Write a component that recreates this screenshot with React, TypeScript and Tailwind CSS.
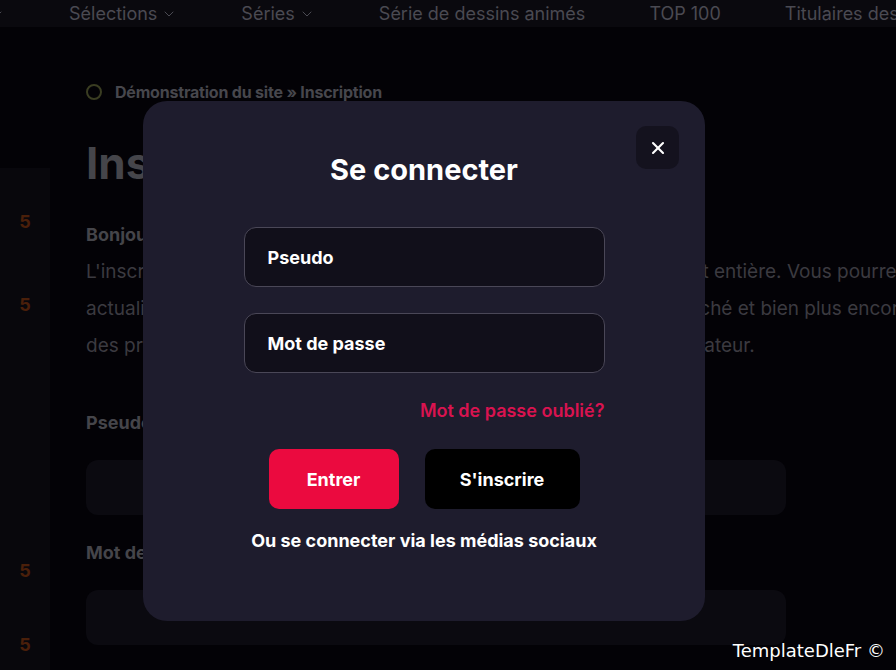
import { X, ChevronDown } from "lucide-react";

const navItems = [
  { label: "Sélections", drop: true },
  { label: "Séries", drop: true },
  { label: "Série de dessins animés", drop: false },
  { label: "TOP 100", drop: false },
  { label: "Titulaires des droits", drop: false },
];

function Background() {
  return (
    <div className="flex flex-col h-[670px] bg-[#030206]">
      <nav className="h-[27px] shrink-0 bg-[#0a090e] flex items-center gap-[64px] whitespace-nowrap text-[18px] text-[#4a4a52] overflow-hidden">
        <ChevronDown className="w-4 h-4 -ml-[11px] shrink-0" strokeWidth={1.5} />
        {navItems.map((it) => (
          <span key={it.label} className="flex items-center gap-1 shrink-0">
            {it.label}
            {it.drop && <ChevronDown className="w-4 h-4" strokeWidth={1.5} />}
          </span>
        ))}
      </nav>

      <div className="flex-1 flex">
        {/* left rating column */}
        <div className="w-[50px] shrink-0 flex flex-col">
          <div className="h-[141px]" />
          <div className="flex-1 bg-[#08070c] flex flex-col items-center text-[18px] leading-[26px] font-bold text-[#4a1f0a]">
            <span className="mt-[41px]">5</span>
            <span className="mt-[57px]">5</span>
            <span className="mt-[240px]">5</span>
            <span className="mt-[48px]">5</span>
          </div>
        </div>

        <div className="flex-1 pl-[36px] pt-[55px] text-[#3b3a40] overflow-hidden whitespace-nowrap">
          <div className="flex items-center gap-[13px] text-[16px] leading-[20px] font-bold text-[#47474d] tracking-[-0.2px]">
            <span className="w-4 h-4 rounded-full border-2 border-[#3a3d22]" />
            Démonstration du site » Inscription
          </div>
          <h1 className="mt-[35px] text-[44px] font-bold leading-[52px] text-[#45454a]">Inscription</h1>
          <p className="mt-[27px] text-[18px] font-bold text-[#45454a] leading-[37px]">Bonjour, cher visiteur !</p>
          <p className="text-[19px] leading-[37px]">
            L'inscription sur notre site vous permettra d'en être un membre à part entière. Vous pourrez
            <br />
            actualiser les nouvelles, écrire des commentaires, voir le contenu caché et bien plus encore. Si
            <br />
            des problèmes surviennent lors de l'inscription, contactez l'administrateur.
          </p>
          <p className="mt-[46px] text-[18px] font-bold text-[#45454a] leading-[26px]">Pseudo:</p>
          <div className="mt-[24px] h-[55px] w-[700px] rounded-[12px] bg-[#0b0a10]" />
          <p className="mt-[25px] text-[18px] font-bold text-[#45454a] leading-[26px]">Mot de passe:</p>
          <div className="mt-[24px] h-[55px] w-[700px] rounded-[12px] bg-[#0b0a10]" />
        </div>
      </div>
    </div>
  );
}

function LoginModal() {
  return (
    <div className="absolute left-[143px] top-[101px] w-[562px] h-[520px] rounded-[24px] bg-[#1e1c2d] flex flex-col items-center pt-[52px] text-white">
      <button className="absolute top-[25px] right-[26px] w-[43px] h-[43px] rounded-[10px] bg-[#14121e] flex items-center justify-center">
        <X className="w-5 h-5 text-white" strokeWidth={2.5} />
      </button>
      <h2 className="text-[29px] font-bold leading-[34px]">Se connecter</h2>

      <div className="mt-[40px] w-[361px] flex flex-col gap-[26px]">
        <div className="h-[60px] rounded-[12px] border border-[#4a4757] bg-[#110f1a] flex items-center px-[23px] text-[18px] font-bold">
          Pseudo
        </div>
        <div className="h-[60px] rounded-[12px] border border-[#4a4757] bg-[#110f1a] flex items-center px-[23px] text-[18px] font-bold">
          Mot de passe
        </div>
      </div>
      <div className="mt-[27px] w-[361px] text-right text-[18px] font-semibold text-[#d91350] leading-[22px]">
        Mot de passe oublié?
      </div>

      <div className="mt-[27px] flex gap-[26px]">
        <button className="w-[130px] h-[60px] rounded-[10px] bg-[#eb0a3f] text-[18px] font-bold">Entrer</button>
        <button className="w-[155px] h-[60px] rounded-[10px] bg-black text-[18px] font-bold">S'inscrire</button>
      </div>

      <p className="mt-[21px] text-[18px] font-bold leading-[22px]">Ou se connecter via les médias sociaux</p>
    </div>
  );
}

export default function App() {
  return (
    <div className="relative w-[896px] h-[670px] overflow-hidden font-['Inter',sans-serif]">
      <Background />
      <LoginModal />
      <div className="absolute right-[11px] bottom-[7px] font-['DejaVu_Sans',sans-serif] text-[18px] leading-[24px] text-white">
        TemplateDleFr ©
      </div>
    </div>
  );
}
